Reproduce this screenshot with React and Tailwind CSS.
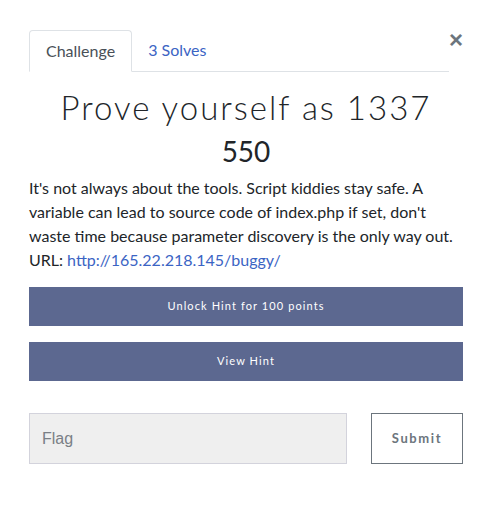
import React from 'react';

const App = () => {
  return (
    <div className="w-[490px] h-[508px] bg-white pt-[30px] pl-[29px] pr-[27px] font-['Lato','Liberation_Sans',sans-serif] text-[#212529]">
      {/* Pestañas */}
      <div className="relative">
        <div className="flex mr-[14px] border-b border-[#dee2e6]">
          <div className="-mb-px px-4 py-2 text-base leading-6 text-[#495057] bg-white border border-[#dee2e6] border-b-white rounded-t">
            Challenge
          </div>
          <div className="px-4 py-2 text-base leading-6 text-[#3b64c4]">3 Solves</div>
        </div>
        <button className="absolute right-0 top-[-2px] text-[24px] leading-none font-bold text-[#6c757d] font-['Liberation_Sans',sans-serif]">
          ×
        </button>
      </div>

      {/* Titulo */}
      <h2 className="pt-4 mb-[7px] text-center text-[33px] leading-[1.2] font-light tracking-[2px] font-['Lato',sans-serif]">
        Prove yourself as 1337
      </h2>
      <h3 className="mb-2 text-center text-[28px] leading-[1.2]">550</h3>

      {/* Descripcion */}
      <p className="text-base leading-6">
        It's not always about the tools. Script kiddies stay safe. A variable can lead to source code of
        index.php if set, don't waste time because parameter discovery is the only way out.
        <br />
        URL: <span className="text-[#3b64c4]">http://165.22.218.145/buggy/</span>
      </p>

      {/* Pistas */}
      <div className="mt-[15px] flex flex-col gap-4">
        <button className="h-[39px] w-full bg-[#5c6890] text-white text-[11px] tracking-[1.1px]">
          Unlock Hint for 100 points
        </button>
        <button className="h-[39px] w-full bg-[#5c6890] text-white text-[11px] tracking-[1.1px]">
          View Hint
        </button>
      </div>

      {/* Flag */}
      <div className="mt-8 flex gap-6">
        <div className="w-[318px] h-[51px] bg-[#efefef] border border-[#d3d3dc] flex items-center px-3 text-[#7a7f86] text-[16px] font-['Liberation_Sans',sans-serif]">
          Flag
        </div>
        <button className="flex-1 h-[51px] border border-[#6c757d] text-[#6c757d] text-[13px] font-bold tracking-[1.6px]">
          Submit
        </button>
      </div>
    </div>
  );
};

export default App;
